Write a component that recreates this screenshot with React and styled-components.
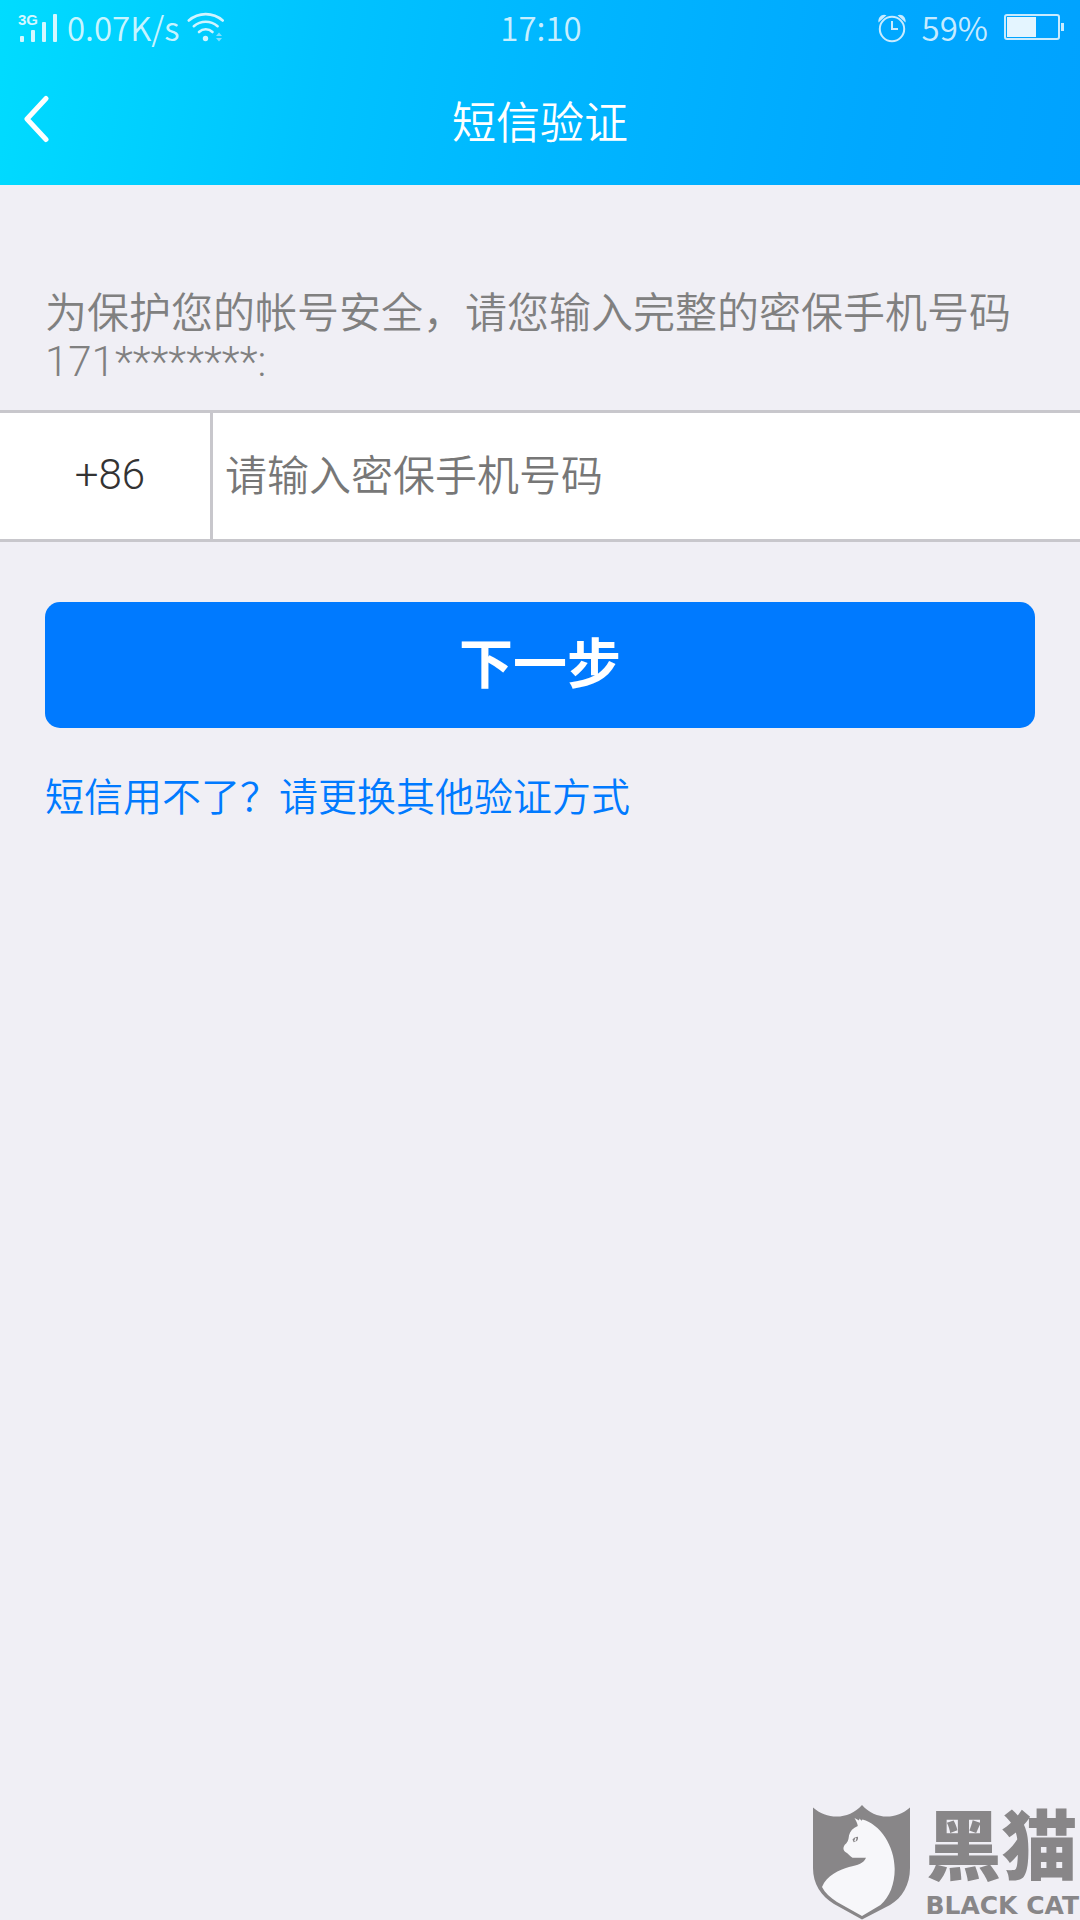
import { useState } from "react";
import styled, { createGlobalStyle } from "styled-components";

const App = () => {
  const [phone, setPhone] = useState("");

  return (
    <>
      <GlobalStyle />
      <PageWrapper>
        <Header>
          <StatusBar>
            <StatusGroup>
              <SignalIcon />
              <StatusText>0.07K/s</StatusText>
              <WifiIcon />
            </StatusGroup>
            <StatusText>17:10</StatusText>
            <StatusGroup $end>
              <AlarmIcon />
              <StatusText>59%</StatusText>
              <BatteryIcon />
            </StatusGroup>
          </StatusBar>
          <TitleBar>
            <BackButton type="button" aria-label="返回">
              <svg width="26" height="48" viewBox="0 0 26 48" fill="none">
                <path
                  d="M23 3.500 4 24l19 20.500"
                  stroke="#fff"
                  strokeWidth="5"
                  strokeLinecap="round"
                  strokeLinejoin="round"
                />
              </svg>
            </BackButton>
            <h1>短信验证</h1>
          </TitleBar>
        </Header>

        <form onSubmit={(e) => e.preventDefault()}>
          <Hint htmlFor="phone">
            为保护您的帐号安全，请您输入完整的密保手机号码
            <br />
            171********:
          </Hint>
          <PhoneRow>
            <AreaCode>+86</AreaCode>
            <input
              id="phone"
              type="tel"
              placeholder="请输入密保手机号码"
              value={phone}
              onChange={(e) => setPhone(e.target.value)}
            />
          </PhoneRow>
          <Actions>
            <SubmitButton type="submit">下一步</SubmitButton>
            <OtherLink href="#other">短信用不了？请更换其他验证方式</OtherLink>
          </Actions>
        </form>

        <Watermark>
          <CatLogo />
          <WatermarkText>
            <strong>黑猫</strong>
            <span>BLACK CAT</span>
          </WatermarkText>
        </Watermark>
      </PageWrapper>
    </>
  );
};

export default App;

const SignalIcon = () => (
  <svg width="42" height="38" viewBox="0 -5 42 38" fill="#d4f7ff">
    <text x="0" y="11" fontSize="15" fontWeight="700" fontFamily="Liberation Sans, sans-serif">
      3G
    </text>
    <rect x="2" y="22" width="4" height="6" rx="1" />
    <rect x="13" y="16" width="4" height="12" rx="1" />
    <rect x="24" y="8" width="4" height="20" rx="1" />
    <rect x="35" y="0" width="4" height="28" rx="1" />
  </svg>
);

const WifiIcon = () => (
  <svg width="38" height="32" viewBox="0 0 38 32" fill="none">
    <g stroke="#d0f4ff" strokeWidth="2.600" strokeLinecap="round">
      <path d="M1.800 8.500C11.500 0 26 0 35.700 8.500" />
      <path d="M6.800 14.200c7-6 16.800-6 23.800 0" />
      <path d="M12 20c4-3.600 9.500-3.600 13.500 0" />
    </g>
    <circle cx="18.500" cy="26.500" r="2.700" fill="#d0f4ff" />
    <path d="M29 24l3-3.500 3 3.500zM29 26l3 3.500 3-3.500z" fill="#7fdfff" />
  </svg>
);

const AlarmIcon = () => (
  <svg width="28" height="30" viewBox="0 0 28 30" fill="none">
    <circle cx="14" cy="16" r="12.200" stroke="#c9ebff" strokeWidth="2" />
    <path d="M14 8v8h6" stroke="#c9ebff" strokeWidth="2" />
    <path
      d="M.5 9.500C-.5 4.500 4 0 8.500 2.200zM27.500 9.500C28.500 4.500 24 0 19.500 2.200z"
      fill="#c9ebff"
    />
  </svg>
);

const BatteryIcon = () => (
  <svg width="60" height="28" viewBox="0 0 60 28" fill="none">
    <rect x="1" y="1" width="54" height="24" rx="2" stroke="#c9ebff" strokeWidth="2" />
    <rect x="3" y="3" width="29" height="20" fill="#e4f5ff" />
    <rect x="57" y="9" width="3" height="8" fill="#c9ebff" />
  </svg>
);

const CatLogo = () => (
  <svg width="98" height="115" viewBox="0 0 98 115">
    <path
      fill="#888688"
      d="M0 2.500C14 15 36 15 49 0c13 15 34 15 48 2.500V63c0 17-8 30-20 37l-28 14.500L21 99C8 91 0 79 0 63z"
    />
    <path
      fill="#f7f7fa"
      d="M41.500 13l4.500 2.500.5-2 2 2.300 1-1.300C67 19 81.700 41 81.700 64c0 15-5 28-14.200 36L49 111 24 97C17 92.500 12 88 9 82c5-12 17-17 27-20 9-2 15-4 17-9.300H39.500c-2.500-1.500-4-4-7.500-6-2.500-2.500-1.500-5 0-7.200 3.500-3 3.500-6 4-9 1-4.500 4-7.500 8.800-9.500-.3-3-1.800-5-3.300-8z"
    />
    <path fill="#888688" d="M39.500 34.500c1-1.500 3-2.500 5.500-2.700.5 3-1 5-4.300 5.500z" />
    <path fill="#f7f7fa" d="M42.500 32.500l1 .8-1 3.400-1.300-.7z" />
  </svg>
);

const GlobalStyle = createGlobalStyle`
  * {
    box-sizing: border-box;
  }

  body {
    margin: 0;
    background: #f0eff5;
    font-family: Roboto, "Noto Sans CJK SC", sans-serif;
    font-weight: 350;
  }

  svg {
    display: block;
    flex-shrink: 0;
  }

  button,
  input {
    font-family: inherit;
  }
`;

const PageWrapper = styled.div`
  position: relative;
  min-height: 100vh;
  background: #f0eff5;
`;

const Header = styled.header`
  background: linear-gradient(
    100deg,
    #00dcff 0%,
    #00c3ff 30%,
    #00b6ff 52%,
    #00a8ff 80%,
    #00a2ff 100%
  );
`;

const StatusBar = styled.div`
  display: grid;
  grid-template-columns: 1fr auto 1fr;
  align-items: center;
  height: 56px;
  padding: 0 16px 0 18px;
`;

const StatusGroup = styled.div`
  display: flex;
  align-items: center;
  gap: ${({ $end }) => ($end ? "16px" : "7px")};
  justify-content: ${({ $end }) => ($end ? "flex-end" : "flex-start")};
`;

const StatusText = styled.span`
  color: rgba(255, 255, 255, 0.8);
  font-family: "Noto Sans CJK SC", sans-serif;
  font-size: 33px;
  font-weight: 350;
  line-height: 52px;
  padding-bottom: 2px;
`;

const TitleBar = styled.div`
  display: grid;
  grid-template-columns: 1fr auto 1fr;
  align-items: center;
  height: 129px;
  padding: 0 23px 4px;

  h1 {
    margin: 0;
    padding-top: 10px;
    color: #fff;
    font-size: 44px;
    font-weight: 350;
    line-height: 64px;
  }
`;

const BackButton = styled.button`
  justify-self: start;
  padding: 0;
  border: none;
  background: none;
  cursor: pointer;
`;

const Hint = styled.label`
  display: block;
  padding: 105px 24px 24px 45px;
  color: #808080;
  font-size: 42px;
  line-height: 48px;
`;

const PhoneRow = styled.div`
  display: flex;
  height: 132px;
  border-top: 3px solid #c8c7cc;
  border-bottom: 3px solid #c8c7cc;
  background: #fff;

  input {
    flex: 1;
    min-width: 0;
    padding: 0 12px;
    border: none;
    outline: none;
    background: none;
    color: #333;
    font-size: 42px;
    font-weight: 350;

    &::placeholder {
      color: #777;
      opacity: 1;
    }
  }
`;

const AreaCode = styled.span`
  display: flex;
  align-items: center;
  justify-content: center;
  width: 213px;
  padding: 0 0 4px 10px;
  border-right: 3px solid #c8c7cc;
  color: #333;
  font-size: 42px;
`;

const Actions = styled.div`
  padding: 60px 45px;
`;

const SubmitButton = styled.button`
  display: block;
  width: 100%;
  height: 126px;
  margin-bottom: 40px;
  padding: 0 0 10px;
  border: none;
  border-radius: 15px;
  background: #007aff;
  color: #fff;
  font-size: 54px;
  font-weight: 700;
  cursor: pointer;
`;

const OtherLink = styled.a`
  color: #007aff;
  font-size: 39px;
  line-height: 60px;
  text-decoration: none;
`;

const Watermark = styled.div`
  position: absolute;
  right: 0;
  bottom: 0;
  display: flex;
  align-items: flex-end;
  gap: 14px;
  color: #888688;
`;

const WatermarkText = styled.div`
  display: flex;
  flex-direction: column;
  padding: 0 1px 0 0;

  strong {
    font-size: 76px;
    font-weight: 900;
    line-height: 88px;
  }

  span {
    font-family: "DejaVu Sans", sans-serif;
    font-size: 25px;
    font-weight: 700;
    line-height: 28px;
  }
`;
